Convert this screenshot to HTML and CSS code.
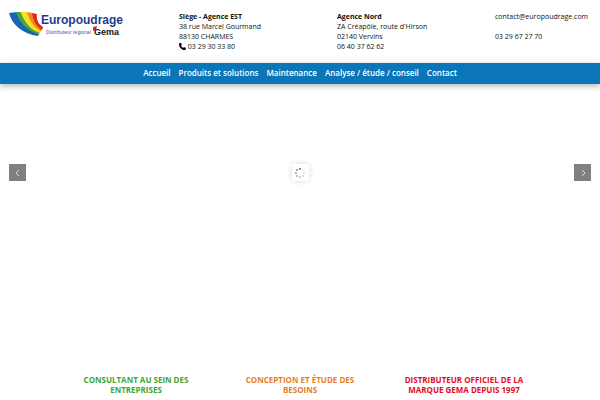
FILE: index.html
```html
<!DOCTYPE html>
<html lang="fr">
<head>
  <meta charset="UTF-8" />
  <meta name="viewport" content="width=device-width, initial-scale=1.0" />
  <title>Europoudrage</title>
  <link rel="stylesheet" href="styles.css">
</head>
<body>
  <header class="top">
    <a class="logo" href="#" aria-label="Europoudrage">
      <svg viewBox="0 0 118 26" width="118" height="26">
        <path fill="#1767b0" d="M0 1 L8 0 C11 9 18 18 30 22 L29 24 C14 22 3 13 0 1Z" />
        <path fill="#4aa63c" d="M7 0 L12 0 C15 9 21 17 31 20 L30 22 C18 19 10 10 7 0Z" />
        <path fill="#f7e01c" d="M12 0 L19 0 C20 8 24 15 33 18 L31 21 C21 18 15 9 12 0Z" />
        <path fill="#f08a1d" d="M18 0 L24 1 C24 7 27 13 34 16 L32 19 C24 15 20 8 18 0Z" />
        <path fill="#dd2a1b" d="M23 1 L28 2 C27 7 29 12 34 15 L33 18 C27 14 24 8 23 1Z" />
        <text class="logo-name" x="32" y="12">Europoudrage</text>
        <text class="logo-sub" x="37" y="22">Distributeur régional</text>
        <path fill="#d9232e" d="M84 15 L88 14 L87 18 L84 19Z" />
        <text class="logo-gema" x="85" y="23">Gema</text>
      </svg>
    </a>
    <address>
      <strong>Siège - Agence EST</strong><br>
      38 rue Marcel Gourmand<br>
      88130 CHARMES<br>
      <svg class="phone" viewBox="0 0 512 512"><path d="M165 25c-8-19-29-29-48-23L29 26C12 31 0 47 0 64c0 247 201 448 448 448 17 0 33-12 38-29l24-88c6-19-4-40-23-48l-96-40c-16-7-35-2-46 11l-40 50c-71-34-127-90-161-161l50-40c13-11 18-30 11-46z" /></svg>
      03 29 30 33 80
    </address>
    <address>
      <strong>Agence Nord</strong><br>
      ZA Créapôle, route d'Hirson<br>
      02140 Vervins<br>
      06 40 37 62 62
    </address>
    <address>
      <a href="mailto:contact@europoudrage.com">contact@europoudrage.com</a><br>
      <br>
      03 29 67 27 70
    </address>
  </header>

  <nav class="menu">
    <a href="#">Accueil</a>
    <a href="#">Produits et solutions</a>
    <a href="#">Maintenance</a>
    <a href="#">Analyse / étude / conseil</a>
    <a href="#">Contact</a>
  </nav>

  <main>
    <section class="slider">
      <button type="button" class="arrow" aria-label="Précédent">
        <svg viewBox="0 0 6 8" width="6" height="8"><path d="M4 1 L1 4 L4 7" /></svg>
      </button>
      <div class="loader">
        <svg viewBox="0 0 10 10" width="10" height="10">
          <circle cx="5" cy="1" r="1" fill="#777" />
          <circle cx="8" cy="2" r="1" fill="#eee" />
          <circle cx="9" cy="5" r="1" fill="#ddd" />
          <circle cx="8" cy="8" r="1" fill="#ccc" />
          <circle cx="5" cy="9" r="1" fill="#bbb" />
          <circle cx="2" cy="8" r="1" fill="#aaa" />
          <circle cx="1" cy="5" r="1" fill="#999" />
          <circle cx="2" cy="2" r="1" fill="#888" />
        </svg>
      </div>
      <button type="button" class="arrow" aria-label="Suivant">
        <svg viewBox="0 0 6 8" width="6" height="8"><path d="M2 1 L5 4 L2 7" /></svg>
      </button>
    </section>

    <section class="services">
      <h2 class="green">Consultant au sein des entreprises</h2>
      <h2 class="orange">Conception et étude des besoins</h2>
      <h2 class="red">Distributeur officiel de la marque Gema depuis 1997</h2>
    </section>
  </main>
</body>
</html>
```
FILE: styles.css
```css
body {
  margin: 0;
  background: #fff;
  color: #111;
  font-family: "Open Sans", sans-serif;
  font-size: 7px;
  line-height: 10px;
}
a {
  color: inherit;
  text-decoration: none;
}
.top {
  display: grid;
  grid-template-columns: 170fr 158fr 158fr 96fr;
  padding: 12px 9px 11px;
}
.logo svg {
  display: block;
}
.logo-name {
  font: bold 12px "Liberation Sans", sans-serif;
  fill: #1d3c8c;
}
.logo-sub {
  font: 5px "Liberation Sans", sans-serif;
  fill: #3f5da0;
}
.logo-gema {
  font: bold 9px "Liberation Sans", sans-serif;
  fill: #111;
}
address {
  font-style: normal;
  white-space: nowrap;
}
.phone {
  width: 7px;
  height: 7px;
  vertical-align: -1px;
}
.menu {
  display: flex;
  justify-content: center;
  gap: 8px;
  padding: 5px 0 6px;
  background: #0a76b7;
  color: #fff;
  font-size: 8px;
  font-weight: 600;
  box-shadow: 0 2px 6px rgba(0, 0, 0, 0.3);
}
.slider {
  display: flex;
  align-items: center;
  justify-content: space-between;
  height: 177px;
  padding: 0 9px;
}
.arrow {
  display: flex;
  align-items: center;
  justify-content: center;
  width: 17px;
  height: 17px;
  padding: 0;
  border: none;
  background: #808080;
  cursor: pointer;
}
.arrow path {
  fill: none;
  stroke: #ddd;
}
.loader {
  display: flex;
  align-items: center;
  justify-content: center;
  width: 17px;
  height: 17px;
  background: #fff;
  border-radius: 2px;
  box-shadow: 0 0 6px rgba(0, 0, 0, 0.15);
}
.services {
  display: grid;
  grid-template-columns: repeat(3, 1fr);
  width: 82%;
  margin: 0 auto;
  padding: 114px 0 5px;
}
.services h2 {
  margin: 0;
  padding: 0 22px;
  font-size: 8px;
  line-height: 10px;
  text-align: center;
  text-transform: uppercase;
}
.green {
  color: #3fa535;
}
.orange {
  color: #e87e24;
}
.red {
  color: #e30d1f;
}
```
